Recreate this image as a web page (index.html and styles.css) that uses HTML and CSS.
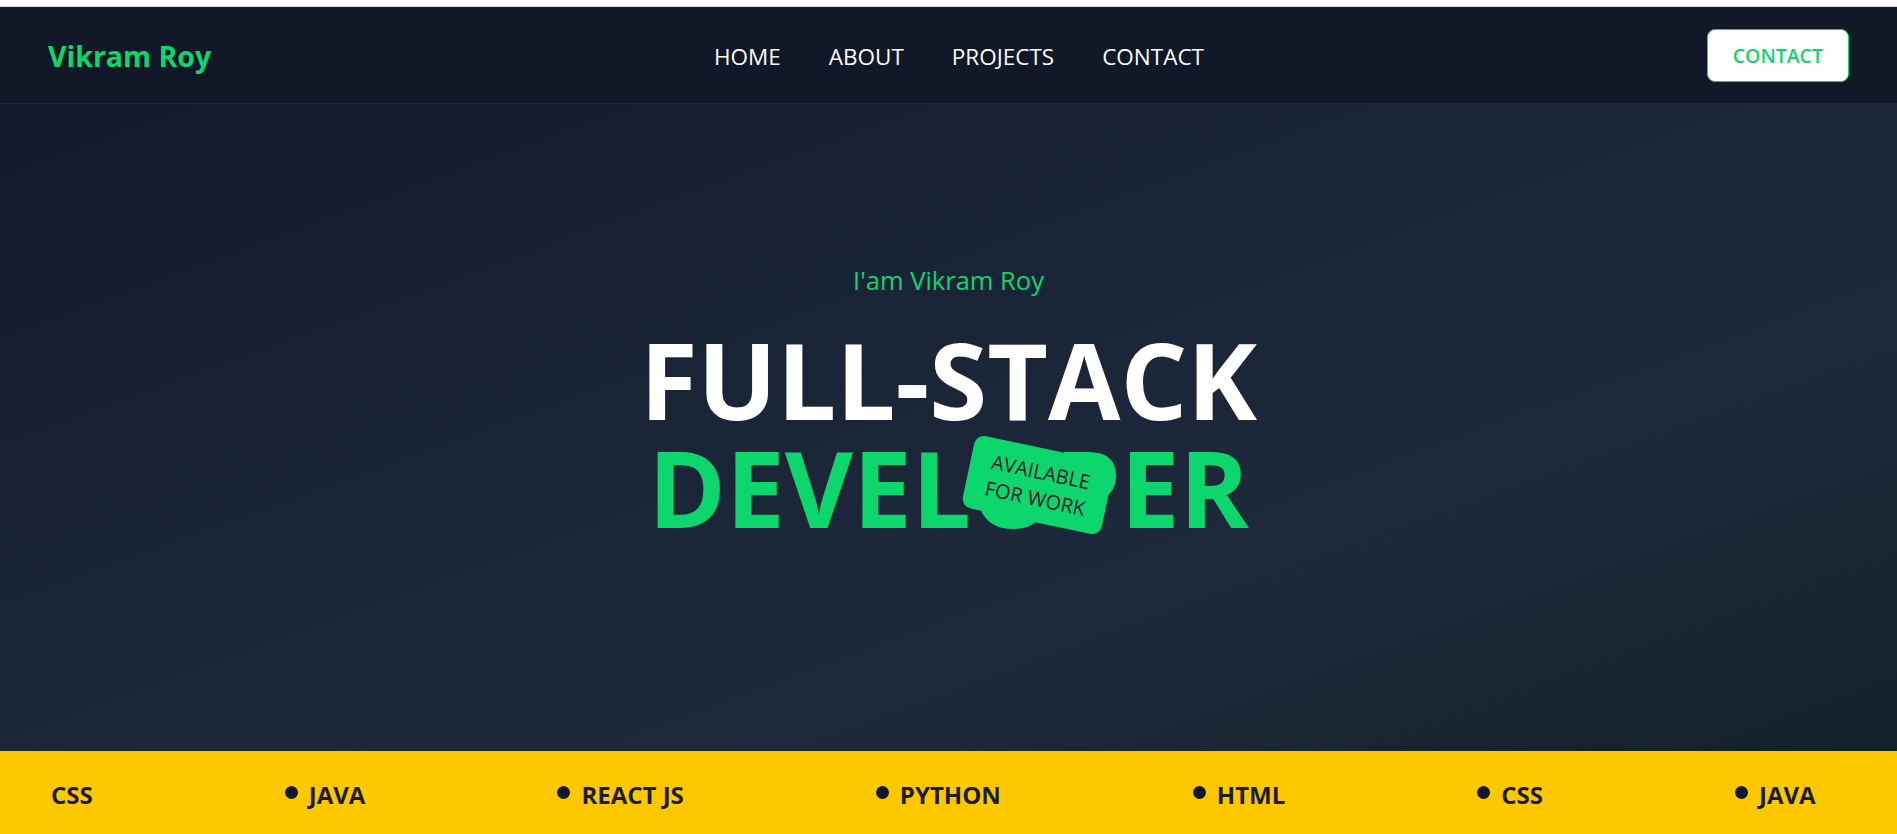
FILE: index.html
```html
<!DOCTYPE html>
<html lang="en">
<head>
<meta charset="utf-8">
<title>Vikram Roy — Full-Stack Developer</title>
<link rel="stylesheet" href="styles.css">
</head>
<body>
  <header class="nav">
    <a class="logo" href="#">Vikram Roy</a>
    <nav class="menu">
      <a href="#">HOME</a>
      <a href="#">ABOUT</a>
      <a href="#">PROJECTS</a>
      <a href="#">CONTACT</a>
    </nav>
    <a class="btn" href="#">CONTACT</a>
  </header>

  <main class="hero">
    <p class="intro">I'am Vikram Roy</p>
    <h1 class="title">
      <span class="line line-white">FULL-STACK</span>
      <span class="line line-green"><span class="word">DEVELOPER<span class="badge">AVAILABLE<br>FOR WORK</span></span></span>
    </h1>
  </main>

  <section class="ticker">
    <div class="track">
      <span class="item first">CSS</span>
      <span class="item">JAVA</span>
      <span class="item">REACT JS</span>
      <span class="item">PYTHON</span>
      <span class="item">HTML</span>
      <span class="item">CSS</span>
      <span class="item">JAVA</span>
    </div>
  </section>
</body>
</html>
```

FILE: styles.css
```css
* { box-sizing: border-box; }

html, body {
  margin: 0;
  height: 834px;
  overflow: hidden;
}

body {
  background: #ffffff;
  border-top: 6px solid #ffffff;
  font-family: "Open Sans", "Noto Sans", sans-serif;
}

a { text-decoration: none; }

.nav {
  height: 98px;
  display: flex;
  align-items: center;
  justify-content: space-between;
  padding: 0 48px;
  background: #111827;
  border-top: 1px solid #d6d9de;
  border-bottom: 1px solid #1f2937;
}

.logo {
  color: #0cd66c;
  font-weight: 700;
  font-size: 28.5px;
  line-height: 1;
  margin-top: 2px;
}

.menu {
  display: flex;
  gap: 48px;
  margin-top: 3px;
}

.menu a {
  color: #ffffff;
  font-size: 22.5px;
  line-height: 30px;
}

.btn {
  display: inline-block;
  padding: 12px 25px;
  background: #ffffff;
  border: 1px solid #0cd66c;
  border-radius: 8px;
  color: #0cd66c;
  font-size: 19.5px;
  font-weight: 600;
  line-height: 27px;
}

.hero {
  height: 647px;
  display: flex;
  flex-direction: column;
  align-items: center;
  justify-content: center;
  padding-bottom: 49px;
  background: linear-gradient(160deg, #111a2c 0%, #1a2437 40%, #1e293b 68%, #132129 100%);
}

.intro {
  margin: 0;
  color: #0cd66c;
  font-size: 25.5px;
  line-height: 32px;
}

.title {
  margin: 30px 0 0;
  font-size: 105px;
  font-weight: 700;
  line-height: 108px;
  text-align: center;
}

.line { display: block; }

.line-white { color: #ffffff; }

.line-green { color: #0cd66c; }

.word {
  position: relative;
  display: inline-block;
}

.badge {
  position: absolute;
  left: 319px;
  top: 14px;
  width: 142px;
  height: 74px;
  padding-top: 10px;
  background: #0cd66c;
  border-radius: 10px;
  color: #111827;
  font-size: 20px;
  font-weight: 400;
  line-height: 27px;
  text-align: center;
  transform: rotate(12deg);
}

.ticker {
  height: 88px;
  background: #fdc800;
  overflow: hidden;
}

.track {
  height: 100%;
  display: flex;
  align-items: center;
  gap: 192px;
  padding-left: 51px;
  white-space: nowrap;
}

.item {
  display: flex;
  align-items: center;
  gap: 11px;
  color: #1a1d26;
  font-size: 24px;
  font-weight: 700;
  line-height: 1;
}

.item::before {
  content: "";
  width: 13px;
  height: 13px;
  border-radius: 50%;
  background: #111827;
  margin-top: -5px;
}

.item.first::before { display: none; }
```
